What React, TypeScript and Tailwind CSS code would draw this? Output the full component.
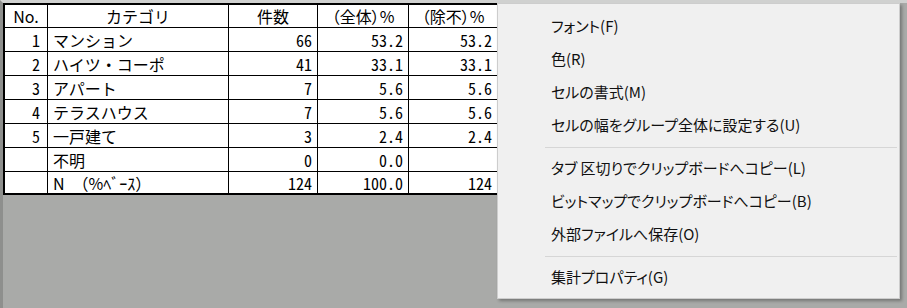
import React from "react";

const rows: [string, string, string, string, string][] = [
  ["1", "マンション", "66", "53.2", "53.2"],
  ["2", "ハイツ・コーポ", "41", "33.1", "33.1"],
  ["3", "アパート", "7", "5.6", "5.6"],
  ["4", "テラスハウス", "7", "5.6", "5.6"],
  ["5", "一戸建て", "3", "2.4", "2.4"],
  ["", "不明", "0", "0.0", ""],
  ["", "N　（%ﾍﾞｰｽ）", "124", "100.0", "124"],
];

const menuGroups: string[][] = [
  ["フォント(F)", "色(R)", "セルの書式(M)", "セルの幅をグループ全体に設定する(U)"],
  ["タブ 区切りでクリップボードへコピー(L)", "ビットマップでクリップボードへコピー(B)", "外部ファイルへ保存(O)"],
  ["集計プロパティ(G)"],
];

function Row({ cells, header, last }: { cells: string[]; header?: boolean; last?: boolean }) {
  const h = header ? "h-[23px]" : last ? "h-[21px]" : "h-[24px]";
  const bb = last ? "" : "border-b border-black";
  const num = header ? "[font-feature-settings:'palt']" : "[font-feature-settings:'hwid']";
  return (
    <div className={`flex ${h} ${bb}`}>
      <div className={`w-[43px] border-r border-black flex items-center ${num} ${header ? "justify-center" : "justify-end pr-[7px]"}`}>
        {cells[0]}
      </div>
      <div className={`w-[181px] border-r border-black flex items-center ${header ? "justify-center" : "justify-start pl-[5px]"}`}>
        {cells[1]}
      </div>
      <div className={`w-[89px] border-r border-black flex items-center ${num} ${header ? "justify-center" : "justify-end pr-[5px]"}`}>
        {cells[2]}
      </div>
      <div className={`w-[91px] border-r border-black flex items-center ${num} ${header ? "justify-center" : "justify-end pr-[5px]"}`}>
        {cells[3]}
      </div>
      <div className={`w-[88px] flex items-center ${num} ${header ? "justify-center" : "justify-end pr-[5px]"}`}>
        {cells[4]}
      </div>
    </div>
  );
}

export default function App() {
  return (
    <div className="relative w-[907px] h-[308px] overflow-hidden bg-[#a9aaa8] border-t-[3px] border-t-[#d0d1d0] border-l-[3px] border-l-[#8e8f8d]">
      <div className="w-[496px] bg-white border-2 border-black text-black text-[16px] leading-none [font-family:'Noto_Sans_CJK_JP',sans-serif]">
        <Row header cells={["No.", "カテゴリ", "件数", "（全体）%", "（除不）%"]} />
        {rows.map((r, i) => (
          <Row key={i} cells={r} last={i === rows.length - 1} />
        ))}
      </div>

      <div className="absolute left-[494px] top-0 w-[403px] h-[296px] bg-[#f0f0f0] border border-[#cdcdcd] shadow-[2px_2px_3px_rgba(0,0,0,0.3)] pt-[6px] pb-[4px] flex flex-col text-[15px] text-[#111] [font-family:'Noto_Sans_CJK_JP',sans-serif] [font-feature-settings:'palt']">
        {menuGroups.map((g, gi) => (
          <React.Fragment key={gi}>
            {gi > 0 && (
              <div className="h-[10px] flex items-center">
                <div className="ml-[47px] mr-[2px] flex-1 h-px bg-[#d6d6d6]" />
              </div>
            )}
            {g.map((item) => (
              <div key={item} className="h-[33px] flex items-center pl-[53px] whitespace-nowrap">
                {item}
              </div>
            ))}
          </React.Fragment>
        ))}
      </div>
    </div>
  );
}
